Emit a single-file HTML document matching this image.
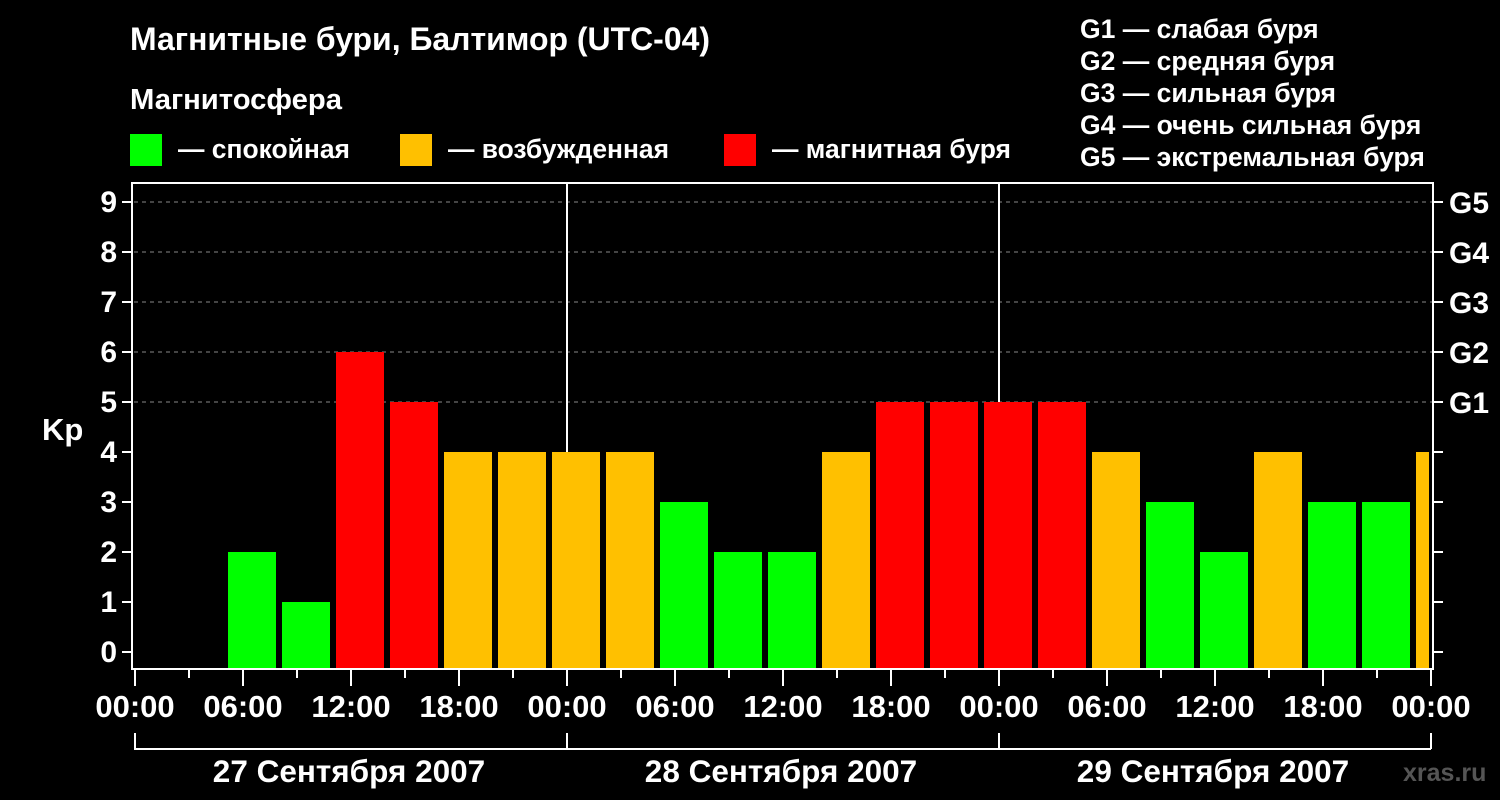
<!DOCTYPE html>
<html><head><meta charset="utf-8"><style>
html,body{margin:0;padding:0;background:#000;}
svg{display:block;font-family:"Liberation Sans",sans-serif;font-weight:bold;}
</style></head><body>
<svg width="1500" height="800" viewBox="0 0 1500 800" xmlns="http://www.w3.org/2000/svg">
<rect width="1500" height="800" fill="#000"/>
<g fill="#fff" font-size="26.5">
<text x="130" y="50" font-size="32" textLength="580" lengthAdjust="spacingAndGlyphs">Магнитные бури, Балтимор (UTC-04)</text>
<text x="130" y="109" font-size="29" textLength="212" lengthAdjust="spacingAndGlyphs">Магнитосфера</text>
<text x="178" y="158" textLength="172" lengthAdjust="spacingAndGlyphs">— спокойная</text>
<text x="448" y="158" textLength="221" lengthAdjust="spacingAndGlyphs">— возбужденная</text>
<text x="772" y="158" textLength="239" lengthAdjust="spacingAndGlyphs">— магнитная буря</text>
<text x="1080" y="38">G1 — слабая буря</text>
<text x="1080" y="70">G2 — средняя буря</text>
<text x="1080" y="102">G3 — сильная буря</text>
<text x="1080" y="134">G4 — очень сильная буря</text>
<text x="1080" y="166">G5 — экстремальная буря</text>
</g>
<rect x="130" y="134" width="32" height="32" fill="#00ff00"/>
<rect x="400" y="134" width="32" height="32" fill="#ffc000"/>
<rect x="724" y="134" width="32" height="32" fill="#ff0000"/>
<g stroke="#888" stroke-dasharray="4,4" stroke-width="1">
<line x1="134" y1="202" x2="1432" y2="202"/>
<line x1="134" y1="252" x2="1432" y2="252"/>
<line x1="134" y1="302" x2="1432" y2="302"/>
<line x1="134" y1="352" x2="1432" y2="352"/>
<line x1="134" y1="402" x2="1432" y2="402"/>
</g>
<g fill="#00ff00">
<rect x="228" y="552" width="48" height="116"/><rect x="282" y="602" width="48" height="66"/>
<rect x="660" y="502" width="48" height="166"/><rect x="714" y="552" width="48" height="116"/><rect x="768" y="552" width="48" height="116"/>
<rect x="1146" y="502" width="48" height="166"/><rect x="1200" y="552" width="48" height="116"/>
<rect x="1308" y="502" width="48" height="166"/><rect x="1362" y="502" width="48" height="166"/>
</g>
<g fill="#ffc000">
<rect x="444" y="452" width="48" height="216"/><rect x="498" y="452" width="48" height="216"/><rect x="552" y="452" width="48" height="216"/><rect x="606" y="452" width="48" height="216"/>
<rect x="822" y="452" width="48" height="216"/><rect x="1092" y="452" width="48" height="216"/><rect x="1254" y="452" width="48" height="216"/>
<rect x="1416" y="452" width="13" height="216"/>
</g>
<g fill="#ff0000">
<rect x="336" y="352" width="48" height="316"/><rect x="390" y="402" width="48" height="266"/>
<rect x="876" y="402" width="48" height="266"/><rect x="930" y="402" width="48" height="266"/><rect x="984" y="402" width="48" height="266"/><rect x="1038" y="402" width="48" height="266"/>
</g>
<g stroke="#fff" stroke-width="2" fill="none">
<rect x="132" y="183" width="1301" height="486"/>
<line x1="567" y1="183" x2="567" y2="452"/>
<line x1="999" y1="183" x2="999" y2="402"/>
<path d="M122 202H132M122 252H132M122 302H132M122 352H132M122 402H132M122 452H132M122 502H132M122 552H132M122 602H132M122 652H132"/>
<path d="M1433 202H1443M1433 252H1443M1433 302H1443M1433 352H1443M1433 402H1443M1433 452H1443M1433 502H1443M1433 552H1443M1433 602H1443M1433 652H1443"/>
<path d="M135 669V686M243 669V686M351 669V686M459 669V686M567 669V686M675 669V686M783 669V686M891 669V686M999 669V686M1107 669V686M1215 669V686M1323 669V686M1431 669V686"/>
<path d="M189 669V678M297 669V678M405 669V678M513 669V678M621 669V678M729 669V678M837 669V678M945 669V678M1053 669V678M1161 669V678M1269 669V678M1377 669V678"/>
<path d="M135 733V749H1431M567 733V749M999 733V749M1431 733V749"/>
</g>
<g fill="#fff" font-size="30" text-anchor="end">
<text x="117" y="212">9</text><text x="117" y="262">8</text><text x="117" y="312">7</text><text x="117" y="362">6</text><text x="117" y="412">5</text><text x="117" y="462">4</text><text x="117" y="512">3</text><text x="117" y="562">2</text><text x="117" y="612">1</text><text x="117" y="662">0</text>
</g>
<text x="42" y="440" fill="#fff" font-size="31">Kp</text>
<g fill="#fff" font-size="30">
<text x="1449" y="213">G5</text><text x="1449" y="263">G4</text><text x="1449" y="313">G3</text><text x="1449" y="363">G2</text><text x="1449" y="413">G1</text>
</g>
<g fill="#fff" font-size="31" text-anchor="middle">
<text x="135" y="717">00:00</text><text x="243" y="717">06:00</text><text x="351" y="717">12:00</text><text x="459" y="717">18:00</text>
<text x="567" y="717">00:00</text><text x="675" y="717">06:00</text><text x="783" y="717">12:00</text><text x="891" y="717">18:00</text>
<text x="999" y="717">00:00</text><text x="1107" y="717">06:00</text><text x="1215" y="717">12:00</text><text x="1323" y="717">18:00</text><text x="1431" y="717">00:00</text>
<text x="349" y="782" font-size="31.5">27 Сентября 2007</text><text x="781" y="782" font-size="31.5">28 Сентября 2007</text><text x="1213" y="782" font-size="31.5">29 Сентября 2007</text>
</g>
<text x="1403" y="781" fill="#555" font-size="25">xras.ru</text>
</svg>
</body></html>
